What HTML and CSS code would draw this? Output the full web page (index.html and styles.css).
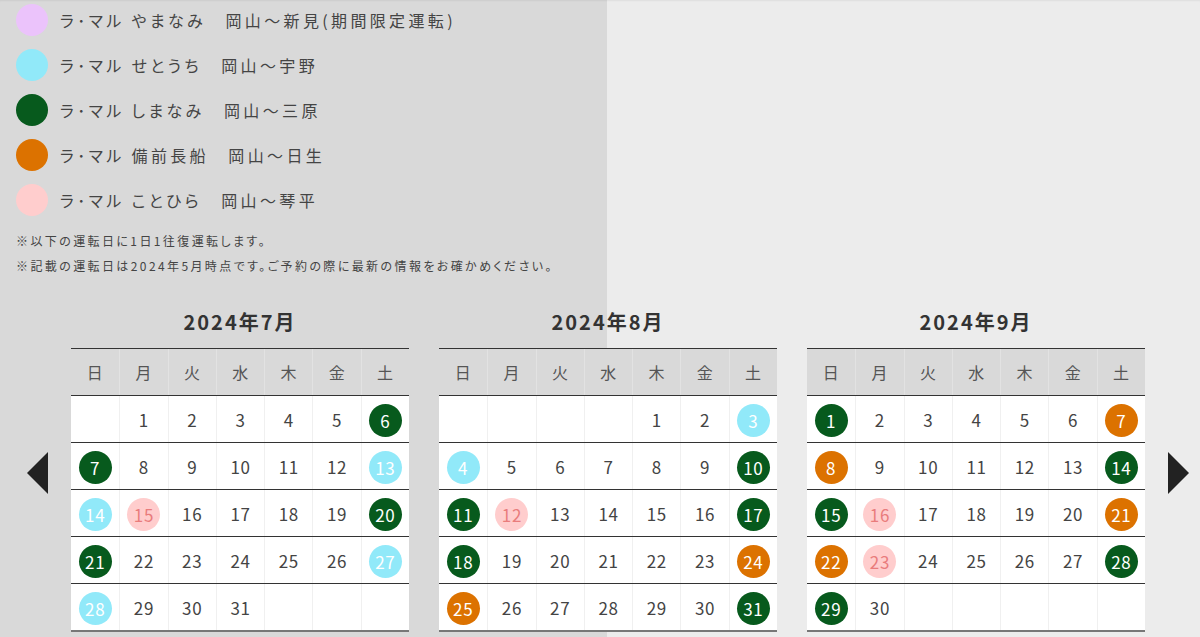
FILE: index.html
```html
<!DOCTYPE html>
<html lang="ja">
<head>
<meta charset="utf-8">
<title>ラ・マル 運転日カレンダー</title>
<link rel="stylesheet" href="styles.css">
</head>
<body>
<div class="page">
  <ul class="legend">
    <li class="legend-item"><span class="dot dot-purple"></span><span class="legend-text">ラ･マル やまなみ　岡山～新見(期間限定運転)</span></li>
    <li class="legend-item"><span class="dot dot-blue"></span><span class="legend-text">ラ･マル せとうち　岡山～宇野</span></li>
    <li class="legend-item"><span class="dot dot-green"></span><span class="legend-text">ラ･マル しまなみ　岡山～三原</span></li>
    <li class="legend-item"><span class="dot dot-orange"></span><span class="legend-text">ラ･マル 備前長船　岡山～日生</span></li>
    <li class="legend-item"><span class="dot dot-pink"></span><span class="legend-text">ラ･マル ことひら　岡山～琴平</span></li>
  </ul>
  <div class="notes">
    <p>※以下の運転日に1日1往復運転します。</p>
    <p>※記載の運転日は2024年5月時点です。ご予約の際に最新の情報をお確かめください。</p>
  </div>

  <div class="slider">
    <button class="arrow arrow-prev" aria-label="前へ">
      <svg width="21" height="42" viewBox="0 0 21 42"><polygon points="21,0 21,42 0,21" fill="#222"/></svg>
    </button>

    <div class="calendars">
      <section class="cal">
        <h2 class="cal-title">2024年7月</h2>
        <div class="cal-row cal-head"><span>日</span><span>月</span><span>火</span><span>水</span><span>木</span><span>金</span><span>土</span></div>
        <div class="cal-row"><span></span><span>1</span><span>2</span><span>3</span><span>4</span><span>5</span><span><i class="m g">6</i></span></div>
        <div class="cal-row"><span><i class="m g">7</i></span><span>8</span><span>9</span><span>10</span><span>11</span><span>12</span><span><i class="m b">13</i></span></div>
        <div class="cal-row"><span><i class="m b">14</i></span><span><i class="m p">15</i></span><span>16</span><span>17</span><span>18</span><span>19</span><span><i class="m g">20</i></span></div>
        <div class="cal-row"><span><i class="m g">21</i></span><span>22</span><span>23</span><span>24</span><span>25</span><span>26</span><span><i class="m b">27</i></span></div>
        <div class="cal-row cal-last"><span><i class="m b">28</i></span><span>29</span><span>30</span><span>31</span><span></span><span></span><span></span></div>
      </section>

      <section class="cal">
        <h2 class="cal-title">2024年8月</h2>
        <div class="cal-row cal-head"><span>日</span><span>月</span><span>火</span><span>水</span><span>木</span><span>金</span><span>土</span></div>
        <div class="cal-row"><span></span><span></span><span></span><span></span><span>1</span><span>2</span><span><i class="m b">3</i></span></div>
        <div class="cal-row"><span><i class="m b">4</i></span><span>5</span><span>6</span><span>7</span><span>8</span><span>9</span><span><i class="m g">10</i></span></div>
        <div class="cal-row"><span><i class="m g">11</i></span><span><i class="m p">12</i></span><span>13</span><span>14</span><span>15</span><span>16</span><span><i class="m g">17</i></span></div>
        <div class="cal-row"><span><i class="m g">18</i></span><span>19</span><span>20</span><span>21</span><span>22</span><span>23</span><span><i class="m o">24</i></span></div>
        <div class="cal-row cal-last"><span><i class="m o">25</i></span><span>26</span><span>27</span><span>28</span><span>29</span><span>30</span><span><i class="m g">31</i></span></div>
      </section>

      <section class="cal">
        <h2 class="cal-title">2024年9月</h2>
        <div class="cal-row cal-head"><span>日</span><span>月</span><span>火</span><span>水</span><span>木</span><span>金</span><span>土</span></div>
        <div class="cal-row"><span><i class="m g">1</i></span><span>2</span><span>3</span><span>4</span><span>5</span><span>6</span><span><i class="m o">7</i></span></div>
        <div class="cal-row"><span><i class="m o">8</i></span><span>9</span><span>10</span><span>11</span><span>12</span><span>13</span><span><i class="m g">14</i></span></div>
        <div class="cal-row"><span><i class="m g">15</i></span><span><i class="m p">16</i></span><span>17</span><span>18</span><span>19</span><span>20</span><span><i class="m o">21</i></span></div>
        <div class="cal-row"><span><i class="m o">22</i></span><span><i class="m p">23</i></span><span>24</span><span>25</span><span>26</span><span>27</span><span><i class="m g">28</i></span></div>
        <div class="cal-row cal-last"><span><i class="m g">29</i></span><span>30</span><span></span><span></span><span></span><span></span><span></span></div>
      </section>
    </div>

    <button class="arrow arrow-next" aria-label="次へ">
      <svg width="21" height="42" viewBox="0 0 21 42"><polygon points="0,0 0,42 21,21" fill="#222"/></svg>
    </button>
  </div>
</div>
</body>
</html>
```

FILE: styles.css
```css
html {
  background: linear-gradient(to right, #d9d9d9 0, #d9d9d9 607px, #ececec 607px, #ececec 100%);
  height: 100%;
}
body {
  margin: 0;
  height: 100%;
  overflow: hidden;
  font-family: "Noto Sans CJK JP", "Noto Sans", sans-serif;
  color: #444;
  box-shadow: inset 0 2px 2px -1px rgba(0,0,0,0.06);
}
.page {
  position: relative;
}
.legend {
  list-style: none;
  margin: 0;
  padding: 0 0 0 16px;
  display: flex;
  flex-direction: column;
  gap: 5px;
}
.legend-item {
  height: 40px;
  display: flex;
  align-items: center;
  gap: 12px;
}
.dot {
  width: 32px;
  height: 32px;
  border-radius: 50%;
  flex: none;
}
.dot-purple { background: #ebc3fb; }
.dot-blue { background: #91e9f9; }
.dot-green { background: #075a1d; }
.dot-orange { background: #dc7200; }
.dot-pink { background: #ffcdcd; }
.legend-text {
  font-size: 16px;
  letter-spacing: 0.21em;
  font-feature-settings: "palt";
  color: #444;
}
.notes {
  margin: 8px 0 0 16px;
  font-size: 12px;
  letter-spacing: 0.2em;
  font-feature-settings: "palt";
  color: #444;
}
.notes p {
  margin: 0;
  line-height: 25px;
}
.slider {
  display: flex;
  align-items: center;
  padding: 29px 0 0 27px;
}
.arrow {
  border: 0;
  background: none;
  padding: 0;
  width: 21px;
  height: 42px;
  margin-top: 6px;
  display: block;
  cursor: pointer;
}
.arrow svg { display: block; }
.calendars {
  display: flex;
  gap: 30px;
  margin: 0 23px;
}
.cal {
  width: 338px;
}
.cal-title {
  margin: 0 0 11px;
  height: 30px;
  line-height: 30px;
  text-align: center;
  font-size: 20px;
  font-weight: 700;
  letter-spacing: 0.1em;
  color: #333;
}
.cal-row {
  display: grid;
  grid-template-columns: repeat(7, 1fr);
  background: #fff;
  border-bottom: 1px solid #333;
}
.cal-row > span {
  height: 46px;
  display: flex;
  align-items: center;
  justify-content: center;
  font-size: 17px;
  letter-spacing: 0.04em;
  color: #444;
  border-left: 1px solid #f0f0f0;
}
.cal-row > span:first-child { border-left: 0; }
.cal-head {
  background: #d9d9d9;
  border-top: 1px solid #333;
}
.cal-head > span {
  font-size: 16px;
  color: #555;
  border-left-color: #e2e2e2;
}
.cal-last {
  border-bottom: 2px solid #777;
}
.m {
  font-style: normal;
  width: 33px;
  height: 33px;
  border-radius: 50%;
  display: flex;
  align-items: center;
  justify-content: center;
  color: #fff;
  margin-top: 2px;
}
.m.g { background: #075a1d; }
.m.b { background: #91e9f9; }
.m.o { background: #dc7200; }
.m.p { background: #ffcdcd; color: #e97c7c; }
```
